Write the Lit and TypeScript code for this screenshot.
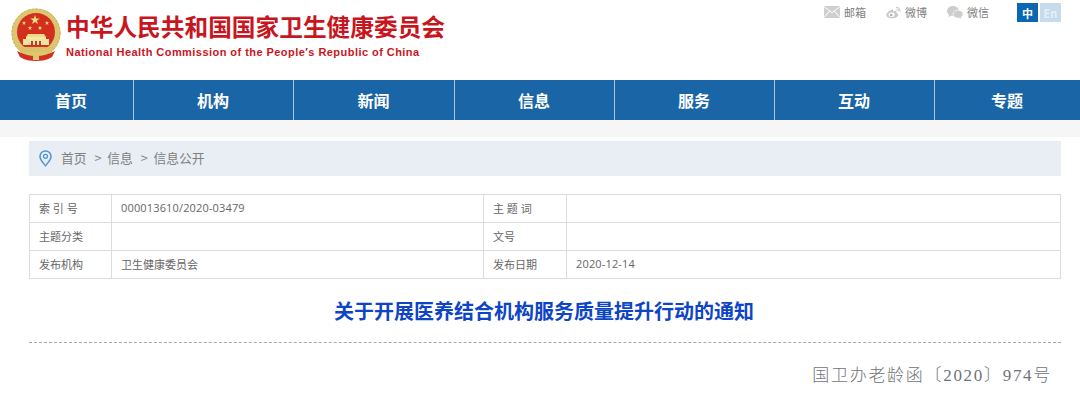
import { LitElement, html, css, svg } from "lit";
import { customElement } from "lit/decorators.js";

const star = (x: number, y: number, r: number) => {
  const pts: string[] = [];
  for (let i = 0; i < 10; i++) {
    const a = -Math.PI / 2 + (i * Math.PI) / 5;
    const q = i % 2 ? r * 0.4 : r;
    pts.push(`${(x + q * Math.cos(a)).toFixed(1)},${(y + q * Math.sin(a)).toFixed(1)}`);
  }
  return svg`<polygon points=${pts.join(" ")} fill="#f3dc78"/>`;
};

const emblem = html`<svg class="emblem" viewBox="0 0 50 54" width="50" height="54">
  <circle cx="25" cy="25" r="24.5" fill="#dcc66f"/>
  <circle cx="25" cy="25" r="24" fill="none" stroke="#c9ae55" stroke-width="1" stroke-dasharray="2 2"/>
  <circle cx="25" cy="24" r="19" fill="#d22f1f"/>
  ${star(24, 12, 5)}${star(13, 15, 2.3)}${star(36, 15, 2.3)}${star(19, 20, 2.3)}${star(29, 20, 2.3)}
  <path d="M17 26h16l2 3H15z" fill="#f0dc82"/>
  <rect x="15" y="29" width="20" height="2" fill="#f5e9a8"/>
  <path d="M12 31h26v6H12z" fill="#efe3a4"/>
  <path d="M20 33h2v4h-2zM24 33h2v4h-2zM28 33h2v4h-2z" fill="#b8402a"/>
  <path d="M8 39h34l-3 5H11z" fill="#d9c26a"/>
  <path d="M6 43c6 3 12 5 19 5s13-2 19-5l-3 6c-5 3-10 4-16 4s-11-1-16-4z" fill="#d22f1f"/>
  <rect x="22" y="45" width="6" height="7" fill="#dcc66f"/>
</svg>`;

const mail = html`<svg viewBox="0 0 16 12" width="16" height="12"><rect width="16" height="12" fill="#cfcfcf"/><path d="M0 .5l8 6.200 8-6.200M0 11.500l5.600-6.400M16 11.500l-5.600-6.400" fill="none" stroke="#fff" stroke-width="1"/></svg>`;
const weibo = html`<svg viewBox="0 0 16 13" width="15" height="13"><path d="M6.600 3.200C3.400 4.400.4 7 .4 9.200c0 2.300 3 3.600 6 3.600 3.700 0 6.600-2 6.600-3.900 0-1.300-1.200-1.800-1.900-2 .5-1.200.3-2.100-.9-2.300-1 0-2 .4-2.600.8.200-1.300-.3-2.600-1-2.200z" fill="#c8c8c8"/><ellipse cx="6" cy="9" rx="3.200" ry="2.500" fill="#fff"/><circle cx="5.600" cy="9.200" r="1.500" fill="#b5b5b5"/><path d="M11 1.200c2.300-.4 4.300 1.400 3.900 4M11.300 3c1.100-.2 2 .7 1.800 1.800" fill="none" stroke="#c8c8c8" stroke-width="1.100" stroke-linecap="round"/></svg>`;
const wechat = html`<svg viewBox="0 0 16 13" width="16" height="13"><ellipse cx="6" cy="5" rx="6" ry="5" fill="#cdcdcd"/><path d="M2 8l-.5 3 3-1.500z" fill="#cdcdcd"/><ellipse cx="11" cy="8.200" rx="5" ry="4" fill="#cdcdcd" stroke="#fff" stroke-width=".7"/><path d="M13.500 11l1 1.800-2.500-1z" fill="#cdcdcd"/></svg>`;
const pin = html`<svg viewBox="0 0 13 17" width="13" height="17"><path d="M6.500 1C3.400 1 1 3.400 1 6.400c0 3.600 3.600 6.800 5.500 9.400C8.400 13.200 12 10 12 6.400 12 3.400 9.600 1 6.500 1z" fill="none" stroke="#4f94d4" stroke-width="1.500"/><circle cx="6.500" cy="6.300" r="2" fill="none" stroke="#4f94d4" stroke-width="1.300"/></svg>`;

@customElement("app-root")
export class AppRoot extends LitElement {
  static styles = css`
    :host { display: block; width: 1080px; height: 409px; overflow: hidden; background: #fff;
      font-family: "Open Sans", "Noto Sans CJK SC", sans-serif; color: #666; }
    .top { display: flex; height: 80px; box-sizing: border-box; padding: 8px 19px 0 11px; }
    .emblem { flex: none; }
    .brand { margin-left: 5px; display: flex; flex-direction: column; }
    .cn { font: 700 23.7px/26px "Noto Sans CJK SC", sans-serif; color: #c9151e; margin-top: 5px; white-space: nowrap; }
    .en { font: 700 11px/14px "Liberation Sans", sans-serif; color: #c9151e; letter-spacing: 0.45px; margin-top: 6px; white-space: nowrap; }
    .tools { margin-left: auto; display: flex; align-items: flex-start; font-size: 11px; color: #808080; line-height: 16px; margin-top: -5px; }
    .tool { display: flex; align-items: center; gap: 4px; margin-right: 20px; height: 18px; }
    .tool span { font-family: "Noto Sans CJK SC", sans-serif; width: 22px; }
    .lang { display: flex; gap: 2px; margin-left: 8px; }
    .lang b { width: 21px; height: 19px; display: grid; place-items: center; font: 700 11px "Noto Sans CJK SC", sans-serif; color: #fff; background: #0a67b3; }
    .lang b.off { background: #c6dbeb; color: #e8f0f6; }
    nav { display: grid; grid-template-columns: 133px 160px 161px 160px 160px 160px 146px; height: 40px; background: #1a65a5; }
    nav a { display: grid; place-items: center; color: #fff; font: 700 16px "Noto Sans CJK SC", sans-serif; border-left: 1px solid #a9c6de; padding-right: 1px; }
    nav a:first-child { border-left: 0; padding: 0 0 0 9px; }
    .band { height: 17px; background: #f6f6f6; }
    main { padding: 4px 19px 0 29px; }
    .crumb { height: 35px; box-sizing: border-box; padding: 0 0 2px 10px; background: #e9eef5; display: flex; align-items: center; font: 12.800px "Noto Sans CJK SC", sans-serif; color: #808080; white-space: pre; }
    .crumb svg { margin: 2px 9px 0 0; }
    .crumb i { font-style: normal; margin: 0 5.500px 0 8px; }
    table { margin-top: 18px; width: 1032px; border-collapse: collapse; table-layout: fixed; font: 11px "Open Sans", "Noto Sans CJK SC", sans-serif; color: #666; }
    td { border: 1px solid #dcdcdc; height: 28px; padding: 0 0 2px 9px; box-sizing: border-box; white-space: pre; }
    td.val { letter-spacing: 0.15px; }
    h1 { margin: 21px 0 0; text-align: center; font: 700 20px/22px "Noto Sans CJK SC", sans-serif; color: #0d45c4; padding-right: 2px; }
    .rule { border-top: 1px dashed #a8a8a8; margin-top: 20px; }
    .doc { margin-top: 21px; text-align: right; padding-right: 9px; font: 300 17px/24px "Liberation Serif", "Noto Sans CJK SC", serif; color: #6f7378; letter-spacing: 1.700px; white-space: nowrap; }
  `;

  render() {
    const items = ["首页", "机构", "新闻", "信息", "服务", "互动", "专题"];
    return html`
      <div class="top">
        ${emblem}
        <div class="brand">
          <div class="cn">中华人民共和国国家卫生健康委员会</div>
          <div class="en">National Health Commission of the People′s Republic of China</div>
        </div>
        <div class="tools">
          <div class="tool">${mail}<span>邮箱</span></div>
          <div class="tool">${weibo}<span>微博</span></div>
          <div class="tool">${wechat}<span>微信</span></div>
          <div class="lang"><b>中</b><b class="off">En</b></div>
        </div>
      </div>
      <nav>${items.map((t) => html`<a>${t}</a>`)}</nav>
      <div class="band"></div>
      <main>
        <div class="crumb">${pin}<span>首页</span><i>></i><span>信息</span><i>></i><span>信息公开</span></div>
        <table>
          <colgroup><col style="width:82px" /><col style="width:372px" /><col style="width:83px" /><col /></colgroup>
          <tr><td>索 引 号</td><td class="val">000013610/2020-03479</td><td>主 题 词</td><td></td></tr>
          <tr><td>主题分类</td><td></td><td>文号</td><td></td></tr>
          <tr><td>发布机构</td><td>卫生健康委员会</td><td>发布日期</td><td class="val">2020-12-14</td></tr>
        </table>
        <h1>关于开展医养结合机构服务质量提升行动的通知</h1>
        <div class="rule"></div>
        <div class="doc">国卫办老龄函〔2020〕974号</div>
      </main>
    `;
  }
}
